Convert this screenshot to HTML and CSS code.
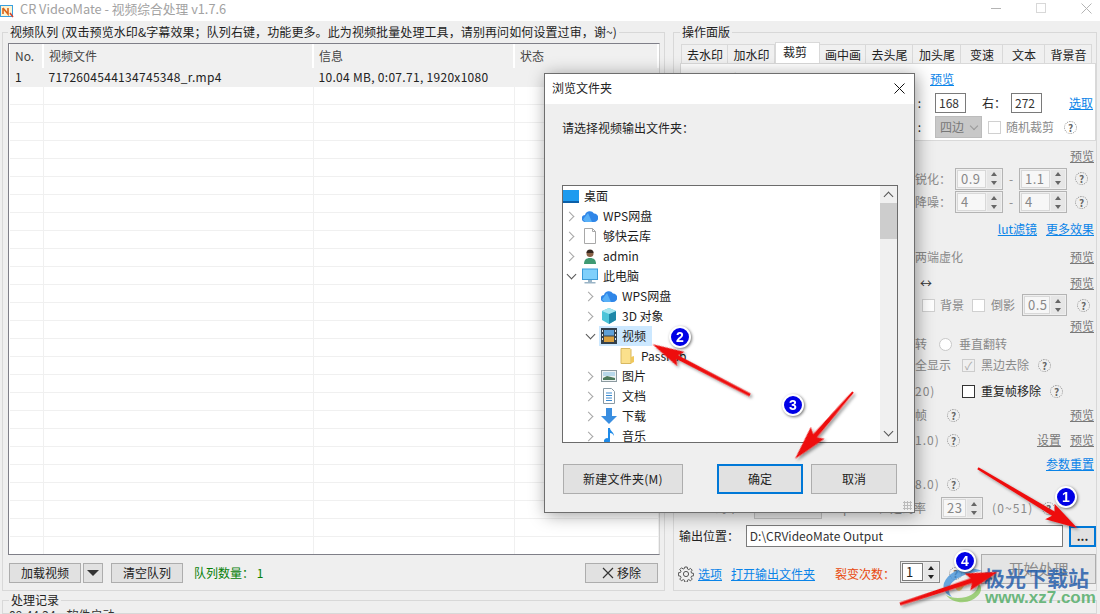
FILE: index.html
```html
<!DOCTYPE html>
<html lang="zh">
<head>
<meta charset="utf-8">
<title>CR VideoMate</title>
<link rel="stylesheet" href="styles.css">
</head>
<body>
<div class="app">
  <header class="titlebar">
    <svg class="app-icon" width="14" height="14" viewBox="0 0 14 14"><rect x="0.5" y="1.5" width="12" height="11" fill="#fff3d0" stroke="#3aa0e0"/><path d="M3 4v6M3 4l5 6V4" fill="none" stroke="#d8641c" stroke-width="1.6"/><path d="M10 9l3 4" stroke="#d04030" stroke-width="1.4"/></svg>
    <span class="app-title">CR VideoMate - 视频综合处理 v1.7.6</span>
    <span class="win-controls">
      <i class="win-min"></i>
      <i class="win-max"></i>
      <svg width="11" height="11" viewBox="0 0 11 11"><path d="M.5.5l10 10M10.5.5l-10 10" stroke="#b4b4b4" fill="none"/></svg>
    </span>
  </header>

  <main class="workspace">
    <fieldset class="group queue">
      <legend>视频队列 (双击预览水印&amp;字幕效果；队列右键，功能更多。此为视频批量处理工具，请别再问如何设置过审，谢~)</legend>
      <div class="table-box">
        <table class="queue-table">
          <colgroup><col class="c1"><col class="c2"><col class="c3"><col class="c4"></colgroup>
          <thead><tr><th>No.</th><th>视频文件</th><th>信息</th><th>状态</th></tr></thead>
          <tbody>
            <tr class="filled"><td>1</td><td>7172604544134745348_r.mp4</td><td>10.04 MB, 0:07.71, 1920x1080</td><td></td></tr>
            <tr><td></td><td></td><td></td><td></td></tr><tr><td></td><td></td><td></td><td></td></tr>
            <tr><td></td><td></td><td></td><td></td></tr><tr><td></td><td></td><td></td><td></td></tr>
            <tr><td></td><td></td><td></td><td></td></tr><tr><td></td><td></td><td></td><td></td></tr>
            <tr><td></td><td></td><td></td><td></td></tr><tr><td></td><td></td><td></td><td></td></tr>
            <tr><td></td><td></td><td></td><td></td></tr><tr><td></td><td></td><td></td><td></td></tr>
            <tr><td></td><td></td><td></td><td></td></tr><tr><td></td><td></td><td></td><td></td></tr>
            <tr><td></td><td></td><td></td><td></td></tr><tr><td></td><td></td><td></td><td></td></tr>
            <tr><td></td><td></td><td></td><td></td></tr><tr><td></td><td></td><td></td><td></td></tr>
            <tr><td></td><td></td><td></td><td></td></tr><tr><td></td><td></td><td></td><td></td></tr>
            <tr><td></td><td></td><td></td><td></td></tr><tr><td></td><td></td><td></td><td></td></tr>
            <tr><td></td><td></td><td></td><td></td></tr><tr><td></td><td></td><td></td><td></td></tr>
            <tr><td></td><td></td><td></td><td></td></tr><tr><td></td><td></td><td></td><td></td></tr>
            <tr><td></td><td></td><td></td><td></td></tr><tr><td></td><td></td><td></td><td></td></tr>
          </tbody>
        </table>
      </div>
      <div class="queue-actions">
        <button class="btn w72">加载视频</button>
        <button class="btn drop-btn"><i class="tri-down"></i></button>
        <button class="btn w72 ml8">清空队列</button>
        <span class="count">队列数量： 1</span>
        <button class="btn remove">
          <svg width="12" height="12" viewBox="0 0 12 12"><path d="M1 1l10 10M11 1L1 11" stroke="#333" stroke-width="1.2" fill="none"/></svg>
          移除
        </button>
      </div>
    </fieldset>

    <fieldset class="group ops">
      <legend>操作面版</legend>
      <nav class="tabs">
        <span class="tab t47">去水印</span><span class="tab t47">加水印</span><span class="tab active t45">裁剪</span><span class="tab t46">画中画</span><span class="tab t47">去头尾</span><span class="tab t48">加头尾</span><span class="tab t42">变速</span><span class="tab t42">文本</span><span class="tab t47">背景音</span>
      </nav>
      <section class="tab-panel">
        <div class="crop-row">
          <i class="check dark"></i>
          <span class="crop-title">裁剪 (视频裁剪后分辨率变化)</span>
          <a class="link">预览</a>
        </div>
        <div class="crop-row end">
          <span class="crop-label">底 :</span>
          <span class="field">168</span>
          <span class="ml16">右：</span>
          <span class="field ml5">272</span>
          <a class="link ml27">选取</a>
        </div>
        <div class="crop-row end">
          <span class="crop-label">式 :</span>
          <span class="select-off">四边<i class="sel-chev"></i></span>
          <i class="check light ml6"></i>
          <span class="off ml5">随机裁剪</span>
          <i class="help ml10">?</i>
        </div>
      </section>

      <div class="controls">
        <div class="row"><a class="plink push">预览</a></div>
        <div class="row">
          <span class="off lead">锐化：</span>
          <span class="spin s48 ml10"><b>0.9</b><i class="arrows"><u class="up"></u><u class="dn"></u></i></span>
          <span class="off dash">-</span>
          <span class="spin s48"><b>1.1</b><i class="arrows"><u class="up"></u><u class="dn"></u></i></span>
          <i class="help ml8">?</i>
        </div>
        <div class="row">
          <span class="off lead">降噪：</span>
          <span class="spin s48 ml10"><b>4</b><i class="arrows"><u class="up"></u><u class="dn"></u></i></span>
          <span class="off dash">-</span>
          <span class="spin s48"><b>4</b><i class="arrows"><u class="up"></u><u class="dn"></u></i></span>
          <i class="help ml8">?</i>
        </div>
        <div class="row"><a class="link push">lut滤镜</a><a class="link ml9">更多效果</a></div>
        <div class="row"><span class="off lead">两端虚化</span><a class="plink push">预览</a></div>
        <div class="row"><span class="lead arrows-h">↔</span><a class="plink push">预览</a></div>
        <div class="row">
          <i class="check light mirror"></i><span class="off ml5">背景</span>
          <i class="check light ml8"></i><span class="off ml6">倒影</span>
          <span class="spin s45 ml7"><b>0.5</b><i class="arrows"><u class="up"></u><u class="dn"></u></i></span>
          <i class="help ml10">?</i>
        </div>
        <div class="row"><a class="plink push">预览</a></div>
        <div class="row"><span class="off lead w11">转</span><i class="radio ml13"></i><span class="off ml7">垂直翻转</span></div>
        <div class="row">
          <span class="off lead">全显示</span>
          <i class="check ticked ml17">✓</i><span class="off ml6">黑边去除</span>
          <i class="help ml9">?</i>
        </div>
        <div class="row">
          <span class="off lead w47 num">20)</span>
          <i class="check dark"></i><span class="ml6">重复帧移除</span>
          <i class="help ml9">?</i>
        </div>
        <div class="row"><span class="off lead w32">帧</span><i class="help">?</i><a class="plink push">预览</a></div>
        <div class="row"><span class="off lead w32 num">1.0)</span><i class="help">?</i><a class="plink push">设置</a><a class="plink ml9">预览</a></div>
        <div class="row"><a class="link push">参数重置</a></div>
        <div class="row"><span class="off lead w32 num">8.0)</span><i class="help">?</i></div>
        <div class="row bitrate">
          <span class="off">码率</span>
          <span class="select-off wide"></span>
          <span class="off ml7 unit">kbps</span>
          <span class="off ml25">恒定码率</span>
          <span class="spin s42 ml15"><b>23</b><i class="arrows"><u class="up"></u><u class="dn"></u></i></span>
          <span class="off ml9 range">(0~51)</span>
          <i class="help ml10">?</i>
        </div>
      </div>

      <div class="output-row">
        <span>输出位置：</span>
        <span class="path">D:\CRVideoMate Output</span>
        <button class="btn dots">...</button>
      </div>
      <div class="opts-row">
        <svg class="gear" width="16" height="16" viewBox="0 0 16 16"><path d="M6.8 1h2.4l.3 2 1.3.6 1.7-1.2 1.7 1.7-1.2 1.7.6 1.3 2 .3v2.4l-2 .3-.6 1.3 1.2 1.7-1.7 1.7-1.7-1.2-1.3.6-.3 2H6.8l-.3-2-1.3-.6-1.7 1.2-1.7-1.7 1.2-1.7-.6-1.3-2-.3V6.8l2-.3.6-1.3-1.2-1.7 1.7-1.7 1.7 1.2 1.3-.6z" fill="none" stroke="#555"/><circle cx="8" cy="8" r="2.6" fill="none" stroke="#555"/></svg>
        <a class="link ml4">选项</a>
        <a class="link ml9">打开输出文件夹</a>
        <span class="fission">裂变次数：</span>
        <span class="spin s40 live"><b>1</b><i class="arrows"><u class="up"></u><u class="dn"></u></i></span>
        <i class="help ml9">?</i>
        <button class="btn start">开始处理</button>
      </div>
    </fieldset>
  </main>

  <fieldset class="group log">
    <legend>处理记录</legend>
    <div class="log-line">09:44:24 &nbsp; &nbsp;软件启动</div>
  </fieldset>
</div>

<div class="dialog">
  <div class="dialog-title">
    <span>浏览文件夹</span>
    <svg width="11" height="11" viewBox="0 0 11 11"><path d="M.5.5l10 10M10.5.5l-10 10" stroke="#111" fill="none"/></svg>
  </div>
  <div class="dialog-body">
    <p class="dialog-label">请选择视频输出文件夹：</p>
    <div class="tree">
      <div class="tree-list">
        <div class="node-row">
          <span class="node root">
            <svg width="16" height="13" viewBox="0 0 16 13"><rect width="16" height="12" fill="#1e9bef"/><rect y="11" width="16" height="2" fill="#0b5fa8"/></svg>桌面
          </span>
        </div>
        <div class="node-row"><i class="chev"></i><span class="node">
          <svg width="16" height="12" viewBox="0 0 16 12"><path d="M3.500 12a3.500 3.500 0 0 1-.5-7 5 5 0 0 1 9-1.500A4.200 4.200 0 0 1 12 12z" fill="#2f86e8"/><path d="M1 9.500L6 3l4 9H3.500z" fill="#58b0f7"/></svg>WPS网盘</span></div>
        <div class="node-row"><i class="chev"></i><span class="node">
          <svg width="16" height="16" viewBox="0 0 16 16"><path d="M2.500.5h8l3 3v12h-11z" fill="#fff" stroke="#a8a8a8"/><path d="M10.500.5v3h3" fill="none" stroke="#a8a8a8"/></svg>够快云库</span></div>
        <div class="node-row"><i class="chev"></i><span class="node">
          <svg width="16" height="16" viewBox="0 0 16 16"><path d="M2 16c0-4 2-6 6-6s6 2 6 6z" fill="#3f9a73"/><circle cx="8" cy="5.500" r="3.500" fill="#8a6248"/><path d="M4.500 5a3.500 3.500 0 0 1 7 0z" fill="#33261e"/></svg>admin</span></div>
        <div class="node-row"><i class="chev open"></i><span class="node">
          <svg width="16" height="16" viewBox="0 0 16 16"><rect x=".5" y="1" width="15" height="10.500" fill="#7fd0fb" stroke="#3a9bd8"/><rect x="6" y="12" width="4" height="2" fill="#9ab4c6"/><rect x="2.500" y="14" width="11" height="1.500" fill="#9ab4c6"/></svg>此电脑</span></div>
        <div class="node-row l2"><i class="chev"></i><span class="node">
          <svg width="16" height="12" viewBox="0 0 16 12"><path d="M3.500 12a3.500 3.500 0 0 1-.5-7 5 5 0 0 1 9-1.500A4.200 4.200 0 0 1 12 12z" fill="#2f86e8"/><path d="M1 9.500L6 3l4 9H3.500z" fill="#58b0f7"/></svg>WPS网盘</span></div>
        <div class="node-row l2"><i class="chev"></i><span class="node">
          <svg width="16" height="16" viewBox="0 0 16 16"><path d="M8 0l7 3v9l-7 4-7-4V3z" fill="#4cc4d8"/><path d="M8 6l7-3v9l-7 4z" fill="#1e88a8"/><path d="M8 0l7 3-7 3-7-3z" fill="#a4e6f0"/></svg>3D 对象</span></div>
        <div class="node-row l2"><i class="chev open"></i><span class="node selected">
          <svg width="16" height="16" viewBox="0 0 16 16"><rect width="16" height="16" fill="#33404c"/><rect x="3" y="2" width="10" height="5.500" fill="#5ea0d8"/><rect x="3" y="8.500" width="10" height="5.500" fill="#d8a040"/><path d="M1 2h1v2H1zm0 4h1v2H1zm0 4h1v2H1zm13-8h1v2h-1zm0 4h1v2h-1zm0 4h1v2h-1z" fill="#e8e8e8"/></svg>视频</span></div>
        <div class="node-row l3"><i class="chev none"></i><span class="node">
          <svg width="16" height="16" viewBox="0 0 16 16"><path d="M1 .5h9l1 1v14H1z" fill="#fbe08c" stroke="#d8b860"/><path d="M11 9l3-1v6l-3 1.500z" fill="#f0c85c"/></svg>PassFab</span></div>
        <div class="node-row l2"><i class="chev"></i><span class="node">
          <svg width="16" height="12" viewBox="0 0 16 12"><rect x=".5" y=".5" width="15" height="11" fill="#eef3f3" stroke="#8c9aa0"/><rect x="2" y="2" width="12" height="4" fill="#b8d8ea"/><path d="M2 8l4-2 8 2v2H2z" fill="#4c7a5c"/></svg>图片</span></div>
        <div class="node-row l2"><i class="chev"></i><span class="node">
          <svg width="16" height="16" viewBox="0 0 16 16"><path d="M2.500.5h8l3 3v12h-11z" fill="#fff" stroke="#8a9aa4"/><path d="M5 5h6M5 7.500h6M5 10h6M5 12.500h6" stroke="#3a8ad0"/></svg>文档</span></div>
        <div class="node-row l2"><i class="chev"></i><span class="node">
          <svg width="16" height="16" viewBox="0 0 16 16"><path d="M5 0h6v8h5l-8 8-8-8h5z" fill="#3a8ee0"/></svg>下载</span></div>
        <div class="node-row l2"><i class="chev"></i><span class="node">
          <svg width="16" height="16" viewBox="0 0 16 16"><path d="M7 0h2c0 3 4 4 4 8-1-2-2-3-4-3v8a3 3 0 1 1-2-2.800z" fill="#1e8ae8"/></svg>音乐</span></div>
      </div>
      <div class="tree-scroll">
        <i class="sc-up"></i>
        <i class="sc-thumb"></i>
        <i class="sc-dn"></i>
      </div>
    </div>
    <div class="dialog-actions">
      <button class="btn new-folder">新建文件夹(M)</button>
      <button class="btn ok">确定</button>
      <button class="btn cancel">取消</button>
    </div>
  </div>
</div>

<div class="watermark">
  <svg class="wm-logo" width="44" height="40" viewBox="0 0 44 40"><path d="M40 6C26 0 8 4 2 18c-2 6 2 12 8 14-5-5-4-12 3-17 7-5 17-8 27-9z" fill="#3a8ed8" opacity=".75"/><path d="M4 30c8 10 26 10 34-2 2-4 1-8-2-10 1 6-4 12-12 14-8 2-15 1-20-2z" fill="#7cc24a" opacity=".7"/><path d="M14 22c4-5 12-7 18-5-5 0-10 3-12 7-2 3-7 2-6-2z" fill="#e8a838" opacity=".7"/></svg>
  <span class="wm-name">极光下载站</span>
  <span class="wm-url">www.xz7.com</span>
</div>

<svg class="annot" width="1100" height="614" viewBox="0 0 1100 614">
  <defs>
    <filter id="sh" x="-20%" y="-50%" width="140%" height="200%"><feDropShadow dx="2" dy="2" stdDeviation="1.500" flood-color="#000" flood-opacity=".4"/></filter>
  </defs>
  <g fill="#ee1111" filter="url(#sh)">
    <polygon transform="translate(978 468) rotate(31.2)" points="0,-1 88,-2.500 84,-9 116,0 84,9 88,2.500 0,1.500"/>
    <polygon transform="translate(750 395) rotate(207.500)" points="0,-1.500 82,-2 78,-8 110,0 78,8 82,2 0,1.500"/>
    <polygon transform="translate(853 392) rotate(130.900)" points="0,-1 58,-2.500 54,-9 88.600,0 54,9 58,2.500 0,1"/>
    <polygon transform="translate(900 604) rotate(-18.100)" points="0,-1.500 75,-2.500 71,-9 103,0 71,9 75,2.500 0,1.500"/>
  </g>
</svg>

<span class="badge b1">1</span>
<span class="badge b2">2</span>
<span class="badge b3">3</span>
<span class="badge b4">4</span>
</body>
</html>
```

FILE: styles.css
```css
* { box-sizing: border-box; }
html, body { margin: 0; height: 614px; overflow: hidden; }
body {
  position: relative;
  font: 12px/16px "Noto Sans CJK SC", "Noto Sans", sans-serif;
  color: #222;
  background: #efefef;
}
i, u { font-style: normal; text-decoration: none; }
a { cursor: default; }
button { font: inherit; color: inherit; padding: 0; }

.app { display: flex; flex-direction: column; height: 614px; }

/* title bar */
.titlebar {
  flex: 0 0 21px;
  display: flex;
  align-items: center;
  background: #fff;
}
.app-icon { margin: 0 6px 0 0; }
.app-title { font-size: 12.750px; color: #a2a2a2; margin-top: -4px; }
.win-controls { margin-left: auto; display: flex; align-items: center; padding: 0 8px 5px 0; }
.win-min { width: 10px; height: 1px; background: #b4b4b4; }
.win-max { width: 10px; height: 10px; border: 1px solid #d8d8d8; margin: 0 35px; }

/* groups */
.workspace { flex: 0 0 570px; display: flex; padding: 3px 3px 0 2px; gap: 8px; }
.group {
  margin: 0;
  min-width: 0;
  border: 1px solid #d8d8d8;
  display: flex;
  flex-direction: column;
}
.group legend { padding: 0 2px; margin-left: 0; color: #222; line-height: 16px; white-space: nowrap; }
.queue legend { letter-spacing: .1px; }

/* queue */
.queue { width: 663px; padding: 3px 4px 0 5px; }
.table-box {
  height: 512px;
  overflow: hidden;
  background: #fff;
  border: 1px solid #7f7f88;
  border-right-color: #d0d0d0;
  padding-left: 1px;
}
.queue-table { width: 100%; border-collapse: collapse; table-layout: fixed; }
.c1 { width: 33px; } .c2 { width: 270px; } .c3 { width: 201px; }
.queue-table th {
  height: 24px;
  padding: 0 0 0 5px;
  font-weight: 400;
  text-align: left;
  background: #f0f0f0;
  color: #444;
  border-right: 2px solid #fff;
}
.queue-table td {
  height: 18px;
  padding: 0 0 0 5px;
  border: 1px solid #f0f0f0;
  border-width: 0 1px 1px 0;
  white-space: nowrap;
  line-height: 16px;
}
.filled td { background: #f0f0f0; border-color: #f0f0f0; color: #222; letter-spacing: .3px; }
.queue-actions { display: flex; align-items: center; margin-top: 8px; height: 20px; padding-left: 1px; }
.btn {
  height: 20px;
  background: #e1e1e1;
  border: 1px solid #adadad;
  display: inline-flex;
  align-items: center;
  justify-content: center;
}
.w72 { width: 72px; }
.ml8 { margin-left: 8px; }
.drop-btn { width: 20px; margin-left: 2px; }
.tri-down { border: 5px solid transparent; border-top: 6px solid #333; border-bottom: 0; border-left-width: 6px; border-right-width: 6px; }
.count { margin-left: 11px; color: #078007; }
.remove { width: 73px; margin-left: auto; gap: 3px; margin-right: 2px; }

/* operations */
.ops { width: 424px; padding: 4px 0 0 6px; }
.tabs { display: flex; height: 19px; margin-left: 1px; }
.tab {
  height: 19px;
  padding-left: 1px;
  background: #f0f0f0;
  border: 1px solid #d9d9d9;
  border-bottom: 0;
  border-left: 0;
  text-align: center;
  line-height: 20px;
}
.tab:first-child { border-left: 1px solid #d9d9d9; }
.tab.active {
  height: 21px;
  margin-top: -2px;
  background: #fff;
  border-left: 1px solid #d9d9d9;
  line-height: 18px;
  text-align: left;
  padding-left: 7px;
  position: relative;
  z-index: 1;
}
.t42 { width: 42px; } .t45 { width: 45px; } .t46 { width: 46px; } .t47 { width: 47px; } .t48 { width: 48px; }
.tab-panel { height: 78px; background: #fff; border: 1px solid #d9d9d9; padding-top: 3px; }
.crop-row { display: flex; align-items: center; height: 24px; padding-left: 3px; }
.crop-row.end { padding-left: 221px; }
.crop-label { width: 33px; white-space: nowrap; word-spacing: 1px; }
.crop-title { width: 233px; padding-left: 5px; }
.link { color: #0a84e8; text-decoration: underline; white-space: nowrap; }
.plink { color: #787878; text-decoration: underline; white-space: nowrap; }
.field {
  width: 31px; height: 20px; padding-left: 3px;
  border: 1px solid #7a7a7a; background: #fff; line-height: 18px; color: #333;
}
.select-off {
  display: flex; align-items: center;
  width: 47px; height: 22px; padding-left: 4px;
  background: #c8c8c8; border: 1px solid #bcbcbc; color: #777;
}
.sel-chev {
  width: 6px; height: 6px; margin: -3px 0 0 7px;
  border: solid #999; border-width: 0 1px 1px 0; transform: rotate(45deg);
}
.check { display: inline-block; flex: none; width: 13px; height: 13px; background: #fff; }
.check.dark { border: 1px solid #333; }
.check.light { border: 1px solid #d0d0d0; }
.check.ticked { border: 1px solid #ccc; background: #f0f0f0; color: #aaa; font-size: 11px; line-height: 11px; text-align: center; }
.radio { flex: none; width: 13px; height: 13px; border-radius: 50%; border: 1px solid #c8c8c8; background: #fff; }
.off { color: #8a8a8a; white-space: nowrap; }
.help {
  display: inline-block; flex: none;
  width: 13px; height: 13px;
  border: 1px dotted #8a8a8a; border-radius: 50%;
  color: #666; font-size: 10px; font-weight: 700; line-height: 11px; text-align: center;
}

.ml4 { margin-left: 4px; } .ml5 { margin-left: 5px; } .ml6 { margin-left: 6px; } .ml7 { margin-left: 7px; }
.ml9 { margin-left: 9px; } .ml10 { margin-left: 10px; } .ml13 { margin-left: 13px; }
.ml15 { margin-left: 15px; } .ml16 { margin-left: 16px; } .ml17 { margin-left: 17px; } .ml25 { margin-left: 25px; } .ml27 { margin-left: 27px; }

.controls {
  margin-top: 4px;
  display: grid;
  grid-template-rows: 22px 23px 24px 30px 26px 26px 18px 24px 12px 30px 22px 26px 24px 24px 16px 32px;
}
.row { display: flex; align-items: center; padding: 0 2px 0 235px; min-height: 0; }
.push { margin-left: auto; }
.lead { width: 30px; white-space: nowrap; }
.lead.w11 { width: 11px; }
.lead.w47 { width: 47px; }
.lead.w32 { width: 32px; }
.lead.num { letter-spacing: 1px; }
.arrows-h { padding-left: 5px; color: #333; }
.mirror { margin-left: 7px; }
.dash { width: 16px; text-align: center; }

.spin {
  display: flex; flex: none;
  height: 22px; padding: 1px;
  border: 1px solid #b4b4b4;
  background: #efefef;
}
.spin b {
  flex: 1; font-weight: 400; padding-left: 3px;
  background: #f7f7f7; border: 1px solid #d8d8d8;
  color: #888; font-size: 13px; line-height: 16px; letter-spacing: .5px;
}
.arrows { width: 14px; display: flex; flex-direction: column; margin-left: 1px; background: #e6e6e6; }
.arrows u { flex: 1; display: flex; align-items: center; justify-content: center; }
.arrows u::before { content: ""; border: 3px solid transparent; }
.up::before { border-bottom: 4px solid #666 !important; border-top: 0 !important; }
.dn::before { border-top: 4px solid #666 !important; border-bottom: 0 !important; }
.s48 { width: 48px; } .s45 { width: 45px; } .s42 { width: 42px; } .s40 { width: 40px; }
.spin.live { margin: 0 0 1px 5px; border-color: #8a8a8a; }
.spin.live b { background: #fff; color: #222; border-color: #7a7a7a; }
.spin.live .up::before { border-bottom-color: #222 !important; }
.spin.live .dn::before { border-top-color: #222 !important; }

.bitrate { padding-left: 35px; }
.unit { width: 24px; }
.range { width: 40px; letter-spacing: 1.1px; }
.select-off.wide { width: 68px; margin-left: 15px; height: 21px; background: #e4e4e4; border-color: #c0c0c0; }

.output-row { display: flex; align-items: center; height: 24px; margin-left: -1px; }
.output-row > span:first-child { width: 67px; }
.path {
  width: 318px; height: 22px; padding-left: 3px;
  background: #fff; border: 1px solid #7a7a7a; line-height: 20px; color: #333;
}
.dots { width: 27px; height: 21px; margin-left: 6px; border: 2px solid #0078d7; line-height: 14px; font-weight: 700; flex: none; }

.opts-row { display: flex; align-items: flex-end; height: 30px; margin-top: 6px; line-height: 20px; }
.gear { margin: 0 0 2px -2px; }
.opts-row .help { margin-bottom: 4px; }
.fission { margin-left: 20px; color: #e8480c; white-space: nowrap; }
.start { width: 115px; height: 30px; margin-left: auto; margin-right: 0; font-size: 15px; color: #8c8c8c; background: #e4e4e4; }

/* log */
.log { flex: 1; margin: 1px 3px 0 2px; padding: 0 0 0 6px; overflow: hidden; }
.log-line { margin-top: -1px; color: #333; white-space: nowrap; }

/* browse dialog — floating window */
.dialog {
  position: absolute;
  left: 544px; top: 73px;
  width: 371px; height: 440px;
  background: #efefef;
  border: 1px solid #6e6e6e;
  box-shadow: 2px 2px 16px rgba(0, 0, 0, .38);
  display: flex;
  flex-direction: column;
}
.dialog-title {
  flex: 0 0 30px;
  background: #fff;
  display: flex; align-items: center; justify-content: space-between;
  padding: 0 9px 2px 7px;
}
.dialog-body { flex: 1; padding: 16px 17px 0 17px; display: flex; flex-direction: column; position: relative; }
.dialog-body::after {
  content: ""; position: absolute; right: 2px; bottom: 2px; width: 9px; height: 9px;
  background: radial-gradient(circle, #bbb 1px, transparent 1.200px) 0 0 / 3px 3px;
}
.dialog-label { margin: 0; height: 16px; line-height: 16px; color: #222; }
.tree {
  flex: none;
  margin-top: 49px;
  height: 258px;
  width: 336px;
  background: #fff;
  border: 1px solid #6b6b6b;
  display: flex;
}
.tree-list { flex: 1; overflow: hidden; }
.node-row { display: flex; align-items: center; height: 20px; }
.node-row.l2 { padding-left: 19px; }
.node-row.l3 { padding-left: 38px; }
.node { display: flex; align-items: center; gap: 5px; height: 20px; margin-left: 3px; padding: 0 2px 0 2px; color: #1c1c1c; white-space: nowrap; }
.node svg { flex: none; width: 16px; }
.node.root { margin-left: -2px; }
.node.selected { background: #cce8ff; padding-right: 6px; }
.chev {
  flex: none; width: 14px; height: 20px; position: relative;
}
.chev::before {
  content: ""; position: absolute; left: 3px; top: 7px; width: 6px; height: 6px;
  border: solid #a6a6a6; border-width: 1.500px 1.500px 0 0; transform: rotate(45deg);
}
.chev.open::before { border-color: #555; transform: rotate(135deg); left: 5px; top: 5px; }
.chev.none::before { display: none; }
.tree-scroll { flex: 0 0 17px; background: #f0f0f0; display: flex; flex-direction: column; align-items: center; position: relative; }
.sc-up, .sc-dn { width: 7px; height: 7px; border: solid #555; position: absolute; }
.sc-up { top: 7px; border-width: 1.500px 0 0 1.500px; transform: rotate(45deg); }
.sc-dn { bottom: 7px; border-width: 0 1.500px 1.500px 0; transform: rotate(45deg); }
.sc-thumb { position: absolute; top: 17px; left: 0; width: 100%; height: 36px; background: #cdcdcd; }
.dialog-actions { display: flex; margin-top: 21px; padding-left: 1px; }
.dialog-actions .btn { height: 30px; }
.new-folder { width: 120px; letter-spacing: .25px; }
.ok { width: 86px; margin-left: 34px; border: 2px solid #0078d7 !important; }
.cancel { width: 86px; margin-left: 8px; }

/* watermark */
.watermark { position: absolute; left: 942px; top: 565px; width: 150px; height: 42px; }
.wm-logo { position: absolute; left: 0; top: 0; }
.wm-name { position: absolute; left: 42px; top: 0; font-size: 21px; line-height: 24px; font-weight: 700; color: rgba(30, 90, 170, .82); white-space: nowrap; }
.wm-url { position: absolute; left: 43px; top: 24px; font: 700 17px/18px "Liberation Sans", sans-serif; color: rgba(90, 175, 110, .9); white-space: nowrap; }

/* annotations */
.annot { position: absolute; left: 0; top: 0; pointer-events: none; }
.badge {
  position: absolute;
  width: 22px; height: 22px;
  border-radius: 50%;
  background: #0000e6;
  border: 2px solid #fff;
  box-shadow: 1px 1px 3px rgba(0, 0, 0, .55);
  color: #fff;
  font: 700 14px/18px "Liberation Sans", sans-serif;
  text-align: center;
}
.b1 { left: 1055px; top: 486px; }
.b2 { left: 669px; top: 326px; }
.b3 { left: 782px; top: 394px; }
.b4 { left: 954px; top: 550px; }
```
